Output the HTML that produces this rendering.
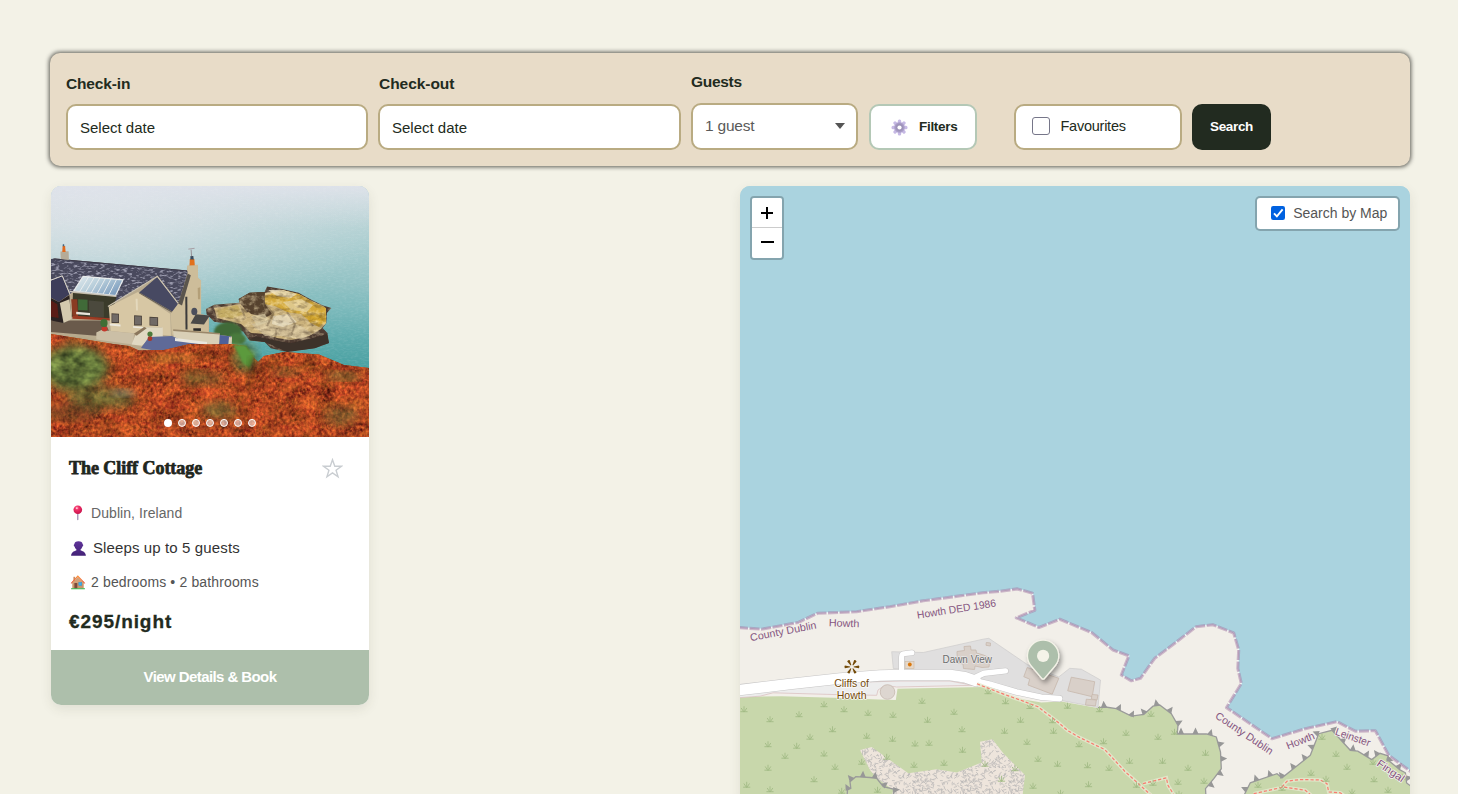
<!DOCTYPE html>
<html lang="en">
<head>
<meta charset="utf-8">
<title>Cottage search</title>
<style>
*{box-sizing:border-box;margin:0;padding:0}
html,body{width:1458px;height:794px;overflow:hidden;background:#f3f2e7}
body{font-family:"Liberation Sans",sans-serif;color:#222b20;position:relative}
#app{position:absolute;left:0;top:0;width:1458px;height:794px;overflow:hidden;background:#f3f2e7}
.abs{position:absolute;white-space:nowrap}
/* search bar */
.bar{position:absolute;left:50px;top:53px;width:1360px;height:113px;background:#e8dcc8;border-radius:10px;box-shadow:0 0 4px 1px rgba(40,40,35,.75)}
.lbl{position:absolute;font-weight:bold;font-size:15.5px;line-height:20px;letter-spacing:-.15px;color:#222b20;white-space:nowrap}
.inp{position:absolute;height:46px;background:#fff;border:2px solid #b9ab82;border-radius:10px}
.inp span{position:absolute;left:12px;top:13px;font-size:15px;line-height:18px;color:#222b20;white-space:nowrap}
/* card */
.card{position:absolute;left:51px;top:186px;width:318px;height:519px;background:#fff;border-radius:10px;box-shadow:0 4px 12px rgba(60,60,40,.10);overflow:hidden}
.photo{position:absolute;left:0;top:0;width:318px;height:251px;overflow:hidden;background:#8fb5b8}
.cta{position:absolute;left:0;top:464px;width:318px;height:55px;background:#adbfab;color:#fff;font-weight:bold;font-size:15px;text-align:center;line-height:53px;letter-spacing:-.58px}
/* map */
.map{position:absolute;left:740px;top:186px;width:670px;height:620px;background:#aad3df;border-radius:10px;overflow:hidden;box-shadow:0 4px 12px rgba(60,60,40,.10)}
.zoomctl{position:absolute;left:10px;top:10px;width:34px;height:64px;border:2px solid rgba(0,0,0,.22);border-radius:4px;background-clip:padding-box}
.zoomctl i{display:block;width:30px;height:30px;background:#fff;position:relative}
.zoomctl i:first-child{border-radius:2px 2px 0 0;height:30px;border-bottom:1px solid #ccc}
.zoomctl i:last-child{border-radius:0 0 2px 2px}
.sbm{position:absolute;left:515px;top:10px;width:145px;height:35px;border:2px solid rgba(0,0,0,.22);border-radius:5px;background:#fff;background-clip:padding-box}
</style>
</head>
<body>
<div id="app">

<!-- SEARCH BAR -->
<div class="bar">
  <div class="lbl" style="left:16px;top:21px">Check-in</div>
  <div class="inp" style="left:16px;top:51px;width:302px"><span>Select date</span></div>
  <div class="lbl" style="left:329px;top:21px;letter-spacing:-.05px">Check-out</div>
  <div class="inp" style="left:328px;top:51px;width:303px"><span>Select date</span></div>
  <div class="lbl" style="left:641px;top:19px;letter-spacing:-.3px">Guests</div>
  <div class="inp" style="left:641px;top:50px;width:167px;height:47px;border-radius:10px">
    <span style="left:12px;top:12px;font-size:15.5px;color:#5a5a5a;letter-spacing:-.2px">1 guest</span>
    <svg class="abs" style="left:142px;top:18px" width="10" height="6" viewBox="0 0 10 6"><path d="M0 0h10L5 6z" fill="#555"/></svg>
  </div>
  <div class="inp" style="left:819px;top:51px;width:108px;height:46px;border-color:#b4c8b6;border-radius:10px">
    <svg class="abs" id="gear" style="left:20.4px;top:12.6px" width="17" height="17" viewBox="-8.5 -8.5 17 17">
      <defs><radialGradient id="gg" r="1"><stop offset=".3" stop-color="#9d92b8"/><stop offset=".55" stop-color="#bcaedd"/><stop offset="1" stop-color="#c9bde6"/></radialGradient></defs>
      <g fill="#c6b9e4">
        <g id="t"><rect x="-1.7" y="-8" width="3.4" height="4.5" rx="1.5"/></g>
        <use href="#t" transform="rotate(45)"/><use href="#t" transform="rotate(90)"/><use href="#t" transform="rotate(135)"/>
        <use href="#t" transform="rotate(180)"/><use href="#t" transform="rotate(225)"/><use href="#t" transform="rotate(270)"/><use href="#t" transform="rotate(315)"/>
      </g>
      <circle r="5.4" fill="url(#gg)"/>
      <circle r="2.1" fill="#fff"/>
    </svg>
    <span style="left:48px;top:12px;font-weight:bold;font-size:13.5px;letter-spacing:-.3px">Filters</span>
  </div>
  <div class="inp" style="left:964px;top:51px;width:168px;height:46px;border-radius:10px">
    <div class="abs" style="left:16px;top:11px;width:18px;height:18px;border:1px solid #767689;border-radius:3px;background:#fff"></div>
    <span style="left:44.5px;top:11px;font-size:14.5px;letter-spacing:-.25px">Favourites</span>
  </div>
  <div class="abs" style="left:1142px;top:51px;width:79px;height:46px;background:#222b20;border-radius:10px;color:#fff;font-weight:bold;font-size:13.5px;line-height:46px;text-align:center;letter-spacing:-.35px">Search</div>
</div>

<!-- CARD -->
<div class="card">
  <div class="photo" id="photo"><svg class="abs" style="left:0;top:0" width="318" height="251" viewBox="0 0 318 251">
<defs>
<linearGradient id="sea" x1="0" y1="0" x2="0" y2="1">
 <stop offset="0" stop-color="#cbdcdf"/><stop offset=".06" stop-color="#c2d8db"/><stop offset=".23" stop-color="#abced0"/><stop offset=".39" stop-color="#92c2c4"/>
 <stop offset=".50" stop-color="#79b8ba"/><stop offset=".61" stop-color="#5eabad"/><stop offset=".72" stop-color="#4aa1a2"/><stop offset="1" stop-color="#429c9c"/>
</linearGradient>
<radialGradient id="seaL" cx=".1" cy="0" r="1" gradientTransform="scale(1 1)"><stop offset="0" stop-color="#e6e7ec" stop-opacity=".95"/><stop offset=".45" stop-color="#dfe3e8" stop-opacity=".6"/><stop offset="1" stop-color="#d5dde2" stop-opacity="0"/></radialGradient>
<filter id="fsea" x="0" y="0" width="100%" height="100%"><feTurbulence type="fractalNoise" baseFrequency=".25 .7" numOctaves="2" seed="4"/><feColorMatrix values="0 0 0 0 1  0 0 0 0 1  0 0 0 0 1  1.2 0 0 0 -.5"/></filter>
<filter id="fveg" x="0" y="0" width="100%" height="100%" color-interpolation-filters="sRGB">
 <feTurbulence type="fractalNoise" baseFrequency=".34 .3" numOctaves="2" seed="8" result="f"/>
 <feTurbulence type="fractalNoise" baseFrequency=".06 .08" numOctaves="3" seed="3" result="c"/>
 <feComposite in="f" in2="c" operator="arithmetic" k1="0" k2=".62" k3=".5" k4="-.06" result="n"/>
 <feColorMatrix in="n" values="1.05 0 0 0 .22  .55 .2 0 0 -.05  .22 0 0 0 .03  0 0 0 0 1"/>
 <feComposite operator="in" in2="SourceGraphic"/>
</filter>
<filter id="fgrn" x="-20%" y="-20%" width="140%" height="140%" color-interpolation-filters="sRGB">
 <feTurbulence type="fractalNoise" baseFrequency=".09 .12" numOctaves="3" seed="21" result="n"/>
 <feColorMatrix in="n" values=".55 0 0 0 .08  .62 0 0 0 .14  .3 0 0 0 .07  0 0 0 0 1" result="c"/>
 <feGaussianBlur in="SourceGraphic" stdDeviation="5" result="b"/>
 <feComposite in="c" in2="b" operator="in"/>
</filter>
<filter id="frock" x="0" y="0" width="100%" height="100%" color-interpolation-filters="sRGB">
 <feTurbulence type="fractalNoise" baseFrequency=".16 .2" numOctaves="3" seed="5" result="n"/>
 <feColorMatrix in="n" values="0 0 0 0 1  0 0 0 0 .93  0 0 0 0 .75  2.4 0 0 0 -1.05"/>
 <feComposite operator="in" in2="SourceGraphic"/>
</filter>
<filter id="froof" x="0" y="0" width="100%" height="100%" color-interpolation-filters="sRGB">
 <feTurbulence type="fractalNoise" baseFrequency=".22 .55" numOctaves="2" seed="9" result="n"/>
 <feColorMatrix in="n" values="0 0 0 0 .85  0 0 0 0 .85  0 0 0 0 .92  4 0 0 0 -1.95"/>
 <feComposite operator="in" in2="SourceGraphic"/>
</filter>
<filter id="frockd" x="0" y="0" width="100%" height="100%" color-interpolation-filters="sRGB">
 <feTurbulence type="fractalNoise" baseFrequency=".12 .22" numOctaves="3" seed="14" result="n"/>
 <feColorMatrix in="n" values="0 0 0 0 .25  0 0 0 0 .18  0 0 0 0 .12  0 2.6 0 0 -1.2"/>
 <feComposite operator="in" in2="SourceGraphic"/>
</filter>
<filter id="b1"><feGaussianBlur stdDeviation="1"/></filter>
<filter id="b06"><feGaussianBlur stdDeviation=".6"/></filter>
<filter id="b3"><feGaussianBlur stdDeviation="3"/></filter>
</defs>
<rect width="318" height="251" fill="url(#sea)"/>
<rect width="318" height="150" fill="url(#seaL)"/>
<linearGradient id="seaT" x1="0" y1="0" x2="0" y2="1"><stop offset="0" stop-color="#dee2ea" stop-opacity=".95"/><stop offset=".35" stop-color="#dbe1e8" stop-opacity=".55"/><stop offset="1" stop-color="#d5dde2" stop-opacity="0"/></linearGradient>
<rect width="318" height="42" fill="url(#seaT)"/>
<rect width="318" height="200" filter="url(#fsea)" opacity=".18"/>
<g filter="url(#b06)">
<polygon points="155.0,123.1 163.2,118.7 188.4,116.8 187.7,113.0 198.5,106.7 213.6,106.1 216.1,100.4 231.2,103.0 247.6,106.7 258.9,113.0 271.5,119.3 280.3,121.9 275.9,126.9 275.3,137.0 271.5,142.0 276.5,147.0 277.8,157.1 263.9,162.2 236.2,165.9 219.9,162.2 213.6,155.9 198.5,154.6 192.2,145.8 179.6,138.2 163.2,135.7 155.6,128.2" fill="#4d3b30"/>
<polygon points="163.0,122.0 190.0,118.0 196.0,126.0 212.0,122.0 214.0,107.0 231.0,104.0 247.0,108.0 259.0,114.0 274.0,121.0 275.0,137.0 270.0,143.0 258.0,150.0 240.0,154.0 226.0,152.0 214.0,148.0 200.0,147.0 190.0,138.0 178.0,135.0 166.0,132.0" fill="#cbb27c"/>
<polygon points="213.0,110.0 231.0,104.0 248.0,108.0 262.0,116.0 275.0,122.0 275.0,137.0 262.0,138.0 250.0,128.0 236.0,126.0 224.0,120.0 214.0,118.0" fill="#d3a93a"/>
<polygon points="187.7,113 198.5,106.7 213.6,106.1 214,118 221,128 214,132 200,128 196,124 190,119" fill="#57432f"/>
<polygon points="200,138 222,133 250,140 262,148 250,153 230,150 214,150" fill="#cfbf9c" opacity=".7"/>
<polygon points="166,124 186,119 192,128 182,133 168,131" fill="#c2a95f" opacity=".85"/>
<polygon points="217,104 232,104 246,108 240,112 226,110" fill="#e6dcc0" opacity=".8"/>
<polygon points="232,116 250,113 262,119 256,126 240,124" fill="#e3d7b4" opacity=".65"/>
<polygon points="222,130 238,128 246,136 232,141 221,138" fill="#e8dfc8" opacity=".7"/>
<polygon points="200,130 214,128 218,136 206,140" fill="#d9cca6" opacity=".7"/>
<path d="M214 118 L222 128 L216 140 M236 126 L244 138 L240 150 M256 126 L262 140 M190 120 L194 132 M226 142 L224 152" stroke="#4a3828" stroke-width="2" fill="none" opacity=".35"/>
<polygon points="256,128 274,124 275,137 268,141 258,136" fill="#d4a62e" opacity=".9"/>
</g>
<polygon points="155.0,123.1 163.2,118.7 188.4,116.8 187.7,113.0 198.5,106.7 213.6,106.1 216.1,100.4 231.2,103.0 247.6,106.7 258.9,113.0 271.5,119.3 280.3,121.9 275.9,126.9 275.3,137.0 271.5,142.0 276.5,147.0 277.8,157.1 263.9,162.2 236.2,165.9 219.9,162.2 213.6,155.9 198.5,154.6 192.2,145.8 179.6,138.2 163.2,135.7 155.6,128.2" fill="#fff" filter="url(#frock)" opacity=".55"/>
<polygon points="163.0,122.0 190.0,118.0 196.0,126.0 212.0,122.0 214.0,107.0 231.0,104.0 247.0,108.0 259.0,114.0 274.0,121.0 275.0,137.0 270.0,143.0 258.0,150.0 240.0,154.0 226.0,152.0 214.0,148.0 200.0,147.0 190.0,138.0 178.0,135.0 166.0,132.0" fill="#fff" filter="url(#frockd)" opacity=".42"/>
<polygon points="198,154 214,156 236,166 264,162 278,157 276,148 262,152 240,157 222,154 205,150" fill="#3e3029" filter="url(#b06)"/>
<ellipse cx="177" cy="146" rx="14" ry="10" fill="#416b39" filter="url(#b1)"/>
<ellipse cx="186" cy="153" rx="9" ry="6" fill="#4a7a3e" filter="url(#b1)"/>
<polygon points="0,74 4,72.5 136,84.6 136.5,80 146.500,79 147,92 150,95 150,128 158,130 158,146 169,149 181,150.500 180,172 0,162" fill="#b9ab8f"/>
<g filter="url(#b06)">
<polygon points="0.0,134.6 52.9,134.6 59.2,147.2 45.3,149.7 0.0,145.9" fill="#6b5a4c"/>
<polygon points="0.0,72.9 4.4,72.6 136.0,84.6 138.5,87.0 127.8,117.6 106.4,90.5 57.3,120.8 65.5,109.4 22.7,105.0 18.9,108.2 11.3,89.9 0.0,94.3" fill="#4a495d"/>
</g>
<polygon points="0.0,72.9 4.4,72.6 136.0,84.6 138.5,87.0 127.8,117.6 106.4,90.5 57.3,120.8 65.5,109.4 22.7,105.0 18.9,108.2 11.3,89.9 0.0,94.3" fill="#fff" filter="url(#froof)" opacity=".55"/>
<polygon points="106.4,90.8 127.0,117.2 124.9,127.7 88.2,106.6" fill="#fff" filter="url(#froof)" opacity=".18"/>
<g filter="url(#b06)">
<polyline points="2.5,72.9 136.0,84.9" fill="none" stroke="#3a3948" stroke-width="1"/>
<polygon points="9.4,65.6 17.6,65.3 17.9,73.9 9.8,73.1" fill="#b5ab98"/>
<polygon points="11.6,60.0 14.1,60.0 14.6,66.1 11.3,66.1" fill="#e1681f"/>
<polygon points="11.8,58.3 13.1,58.3 13.4,60.3 11.6,60.3" fill="#43627a"/>
<polygon points="0.0,94.6 11.1,90.3 18.4,108.4 7.8,116.0 0.0,111.7" fill="#3d3e5a"/>
<polyline points="0.0,94.1 11.3,89.8 19.1,108.4" fill="none" stroke="#d9d6cf" stroke-width="1"/>
<polygon points="0.0,111.9 7.8,116.0 18.4,108.9 20.2,133.3 12.6,137.1 0.0,134.6" fill="#2a2220"/>
<polygon points="8.8,117.0 18.4,113.2 20.8,133.3 12.6,137.1" fill="#d4c9ae"/>
<polygon points="0.0,114.5 6.3,118.2 7.6,132.1 0.0,130.8" fill="#5a1f18"/>
<polygon points="22.0,106.9 65.5,110.9 59.2,132.7 20.8,130.8" fill="#3a3a2c"/>
<polygon points="20.2,113.2 26.2,113.2 27.1,130.2 21.4,129.6" fill="#8a3a22"/>
<polygon points="27.1,113.2 36.5,113.8 36.5,124.5 27.1,123.9" fill="#3f6a38"/>
<polygon points="37.8,114.5 52.9,115.7 52.9,131.5 38.4,130.8" fill="#4c4a3c"/>
<polygon points="25.2,125.8 39.0,127.0 39.0,129.3 25.2,128.3" fill="#e8e4da"/>
<polygon points="21.4,129.6 59.2,132.3 59.2,134.6 21.4,132.7" fill="#9c3a24"/>
<linearGradient id="gl" x1="0" y1="0" x2="1" y2=".6"><stop offset="0" stop-color="#e4ecef"/><stop offset=".5" stop-color="#b9cfdb"/><stop offset="1" stop-color="#7f9fc0"/></linearGradient>
<polygon points="32.1,90.3 72.0,93.8 64.5,109.7 22.7,105.1" fill="url(#gl)" stroke="#e9ecec" stroke-width="1.2"/>
<polyline points="37.7,90.8 28.5,105.8" stroke="#eef1f0" stroke-width=".9" fill="none"/>
<polyline points="43.3,91.3 34.4,106.4" stroke="#eef1f0" stroke-width=".9" fill="none"/>
<polyline points="48.9,91.8 40.2,107.0" stroke="#eef1f0" stroke-width=".9" fill="none"/>
<polyline points="54.5,92.2 46.1,107.7" stroke="#eef1f0" stroke-width=".9" fill="none"/>
<polyline points="60.1,92.7 51.9,108.3" stroke="#eef1f0" stroke-width=".9" fill="none"/>
<polyline points="65.7,93.2 57.8,108.9" stroke="#eef1f0" stroke-width=".9" fill="none"/>
<polyline points="18.9,105.4 65.5,110.2" stroke="#c9c7c0" stroke-width="1.3" fill="none"/>
<polygon points="57.7,120.8 86.9,106.1 119.1,127.8 119.9,149.7 110.8,148.7 110.8,141.2 94.7,140.9 88.2,147.7 59.8,144.9" fill="#d7c7a4"/>
<polygon points="106.4,90.8 127.0,117.2 124.9,127.7 88.2,106.6" fill="#474962"/>
<polyline points="56.9,120.5 106.4,90.3 127.2,117.5" fill="none" stroke="#cfc6b0" stroke-width="1.2"/>
<polyline points="88.2,106.9 124.7,128.3" fill="none" stroke="#6a6256" stroke-width="1.1"/>
<polygon points="136.3,79.4 146.9,78.7 147.1,91.8 150.1,94.6 150.1,128.6 157.7,129.8 157.7,145.9 120.9,148.7 119.6,127.7 127.5,117.2 136.6,87.0" fill="#cdbd9a"/>
<polygon points="127.2,117.6 136.6,87.4 139.8,89.3 131.0,119.5" fill="#5a544e"/>
<polygon points="138.8,73.1 143.3,72.9 143.8,79.2 138.5,79.4" fill="#e2711f"/>
<polygon points="139.5,70.1 142.3,70.1 142.8,73.6 139.3,73.6" fill="#3a4c5e"/>
<polyline points="140.6,70.4 140.1,63.6" stroke="#8d7f86" stroke-width=".8" fill="none"/>
<polyline points="137.3,63.1 143.6,62.3" stroke="#a08f95" stroke-width=".8" fill="none"/>
<polygon points="134.3,110.7 136.3,110.7 136.5,143.4 134.5,143.4" fill="#3b3a3a"/>
<polygon points="146.7,101.9 149.2,101.2 149.2,113.2 147.0,113.2" fill="#b39f78"/>
<ellipse cx="143.3" cy="125.5" rx="3" ry="3.8" fill="#4b4f5c"/>
<polygon points="144.8,128.3 158.9,129.6 153.0,138.6 139.5,137.4" fill="#4a4846"/>
<polygon points="142.3,142.2 149.9,142.2 149.9,144.9 142.3,144.7" fill="#2c2a28"/>
<polygon points="60.5,127.3 68.0,127.7 68.0,137.1 60.5,136.9" fill="#4a4038"/>
<polygon points="61.2,128.3 67.3,128.6 67.3,136.1 61.2,136.0" fill="#6f6a66"/>
<polygon points="83.1,129.3 90.9,129.7 90.9,139.6 83.1,139.4" fill="#4a4038"/>
<polygon points="83.9,130.3 90.2,130.6 90.2,138.6 83.9,138.5" fill="#6f6a66"/>
<polygon points="98.5,130.8 107.1,131.2 107.1,139.9 98.5,139.6" fill="#4a4038"/>
<polygon points="99.2,131.8 106.3,132.1 106.3,138.9 99.2,138.8" fill="#6f6a66"/>
<polygon points="58.7,137.4 69.5,138.4 69.5,140.4 58.7,139.4" fill="#ece8dd"/>
<polygon points="82.1,140.1 91.9,140.9 91.9,142.4 82.1,141.8" fill="#ece8dd"/>
<polygon points="84.6,112.7 86.6,112.7 86.9,124.5 85.1,124.5" fill="#e4d9bd"/>
<polygon points="45.3,146.6 50.4,144.1 83.1,147.5 81.9,158.5 45.3,153.5" fill="#cbbfa6"/>
<polygon points="84.1,149.7 94.7,141.2 111.8,141.4 111.8,151.0 100.8,151.6 90.7,159.8 80.6,158.5" fill="#e0d8c2"/>
<polygon points="83.1,147.5 93.2,140.9 95.7,142.2 85.6,149.7" fill="#8a765c"/>
<polygon points="122.2,143.7 168.8,147.5 168.5,159.8 122.8,154.8" fill="#d9cfb6"/>
<polygon points="122.2,143.2 168.8,146.9 168.8,148.5 122.2,144.9" fill="#9a876a"/>
<polygon points="88.2,179.9 98.2,170.5 120.9,170.5 133.5,176.8 157.4,178.7 151.1,185.0 110.8,185.6" fill="#5d6896"/>
</g>
<g filter="url(#b06)">
<polygon points="90,162 98,151 121,150 134,156 157,158 150,166 111,166" fill="#5e6a98"/>
<polygon points="124,152 156,156 156,159 124,155" fill="#e9e6de"/>
<polygon points="168.8,149 180,150.5 178,162 168,160" fill="#50609a"/>
<polygon points="178,151 181,151.5 180,164 177,162" fill="#d8d0b8"/>
<ellipse cx="53.5" cy="143" rx="3" ry="2.4" fill="#c4382a"/><ellipse cx="53" cy="137" rx="3.6" ry="4" fill="#3f6e34"/>
<ellipse cx="99" cy="152.5" rx="2.3" ry="2.6" fill="#a8382a"/><ellipse cx="99" cy="148" rx="2.6" ry="2.6" fill="#4b7a3a"/>
</g>
<polygon points="0.0,148.0 31.5,153.0 50.0,156.0 62.0,158.0 78.0,160.0 88.0,164.5 113.0,164.0 138.5,158.0 160.0,158.5 180.0,158.0 195.0,160.0 203.0,172.0 207.0,176.0 213.0,170.0 233.0,166.0 268.0,168.6 293.0,179.0 318.0,182.0 318.0,251.0 0.0,251.0" fill="#a8401a"/>
<polygon points="0.0,148.0 31.5,153.0 50.0,156.0 62.0,158.0 78.0,160.0 88.0,164.5 113.0,164.0 138.5,158.0 160.0,158.5 180.0,158.0 195.0,160.0 203.0,172.0 207.0,176.0 213.0,170.0 233.0,166.0 268.0,168.6 293.0,179.0 318.0,182.0 318.0,251.0 0.0,251.0" fill="#fff" filter="url(#fveg)"/>
<g>
<ellipse cx="24" cy="182" rx="34" ry="24" fill="#fff" filter="url(#fgrn)" opacity=".95"/>
<ellipse cx="50" cy="212" rx="34" ry="11" fill="#fff" filter="url(#fgrn)" opacity=".7"/>
<ellipse cx="194" cy="172" rx="12" ry="14" fill="#fff" filter="url(#fgrn)" opacity=".9"/>
<ellipse cx="150" cy="192" rx="22" ry="7" fill="#fff" filter="url(#fgrn)" opacity=".5"/>
<ellipse cx="168" cy="224" rx="18" ry="8" fill="#fff" filter="url(#fgrn)" opacity=".6"/>
<ellipse cx="292" cy="190" rx="18" ry="4" fill="#fff" filter="url(#fgrn)" opacity=".7"/>
<ellipse cx="290" cy="230" rx="18" ry="10" fill="#fff" filter="url(#fgrn)" opacity=".45"/>
<ellipse cx="235" cy="186" rx="14" ry="4" fill="#fff" filter="url(#fgrn)" opacity=".5"/>
</g>
<ellipse cx="120" cy="172" rx="26" ry="5" fill="#c9a23a" opacity=".35" filter="url(#b3)"/>
<ellipse cx="72" cy="207" rx="13" ry="4" fill="#8d8c80" opacity=".45" filter="url(#b3)"/>
<ellipse cx="22" cy="226" rx="30" ry="10" fill="#3a3a24" opacity=".4" filter="url(#b3)"/>
<polygon points="182,159 195,159 203,170 199,182 192,177 187,167" fill="#5c9a3c" filter="url(#b1)"/>
<path d="M203 172 Q199 186 196 202" stroke="#2e2410" stroke-width="5" fill="none" opacity=".55" filter="url(#b3)"/>
<circle cx="117" cy="236.9" r="4" fill="#fff"/>
<circle cx="131" cy="236.9" r="3.5" fill="#fff" fill-opacity=".5" stroke="#fff" stroke-width="1"/>
<circle cx="145" cy="236.9" r="3.5" fill="#fff" fill-opacity=".5" stroke="#fff" stroke-width="1"/>
<circle cx="159" cy="236.9" r="3.5" fill="#fff" fill-opacity=".5" stroke="#fff" stroke-width="1"/>
<circle cx="173" cy="236.9" r="3.5" fill="#fff" fill-opacity=".5" stroke="#fff" stroke-width="1"/>
<circle cx="187" cy="236.9" r="3.5" fill="#fff" fill-opacity=".5" stroke="#fff" stroke-width="1"/>
<circle cx="201" cy="236.9" r="3.5" fill="#fff" fill-opacity=".5" stroke="#fff" stroke-width="1"/>
</svg></div>
  <div class="abs" id="title" style="left:18px;top:269.5px;font-family:'Liberation Serif',serif;font-weight:bold;font-size:18px;line-height:24px;letter-spacing:-.05px;color:#1f261d;-webkit-text-stroke:.75px #1f261d">The Cliff Cottage</div>
  <svg class="abs" style="left:271px;top:272px" width="21" height="20.5" viewBox="0 0 23 22" preserveAspectRatio="none"><path d="M11.5 1.8l2.5 7h7.3l-5.9 4.4 2.2 7-6.1-4.3-6.1 4.3 2.2-7L1.7 8.800h7.3z" fill="none" stroke="#c9cdd1" stroke-width="1.5" stroke-linejoin="miter"/></svg>
  <div class="abs" style="left:40px;top:318px;font-size:14px;line-height:18px;color:#666;letter-spacing:.07px">Dublin, Ireland</div>
  <div class="abs" style="left:42px;top:353px;font-size:15px;line-height:18px;color:#333;letter-spacing:.12px">Sleeps up to 5 guests</div>
  <div class="abs" style="left:40px;top:387px;font-size:14px;line-height:18px;color:#555;letter-spacing:.14px">2 bedrooms • 2 bathrooms</div>
  <div class="abs" style="left:18px;top:423.5px;font-weight:bold;font-size:19px;line-height:24px;letter-spacing:.92px;color:#222b20;-webkit-text-stroke:.3px #222b20">€295/night</div>

  <svg class="abs" style="left:21px;top:319px" width="12" height="16" viewBox="0 0 12 16">
    <defs><radialGradient id="pg" cx=".4" cy=".3" r=".75"><stop offset="0" stop-color="#ff7d9c"/><stop offset=".35" stop-color="#ee2d66"/><stop offset="1" stop-color="#c4124a"/></radialGradient></defs>
    <path d="M5.8 8v6.6" stroke="#9079a6" stroke-width="1.1" stroke-linecap="round"/>
    <circle cx="5.8" cy="4.7" r="4.3" fill="url(#pg)"/><circle cx="4.8" cy="3.2" r=".9" fill="#ffd0dc" opacity=".9"/>
  </svg>
  <svg class="abs" style="left:19px;top:353.500px" width="17" height="17" viewBox="0 0 17 17">
    <defs><linearGradient id="ug" x1="0" y1="0" x2="0" y2="1"><stop offset="0" stop-color="#5f3499"/><stop offset="1" stop-color="#432277"/></linearGradient></defs>
    <path d="M1.1 15.7c.2-3.4 2.6-4.6 5-5.3.5-.2.6-.6.3-1C5.300 8.500 4.800 7.500 4.700 6.500c-.7-.1-.9-.7-.9-1.300 0-.5.200-.8.600-.9C4.400 2.400 5.900 1.300 8.500 1.300s4.100 1.100 4.100 3c.4.100.6.400.6.900 0 .6-.2 1.200-.9 1.300-.1 1-.6 2-1.700 2.900-.3.400-.2.800.3 1 2.400.7 4.800 1.900 5 5.300z" fill="url(#ug)"/>
  </svg>
  <svg class="abs" style="left:19px;top:388px" width="17" height="16" viewBox="0 0 17 16">
    <defs><linearGradient id="rg" x1="0" y1="0" x2="0" y2="1"><stop offset="0" stop-color="#ff9a3a"/><stop offset="1" stop-color="#e8432c"/></linearGradient></defs>
    <rect x="3.4" y="2.800" width="1.700" height="4.500" fill="#c98d63"/>
    <rect x="2.300" y="7.500" width="11.400" height="7" fill="#c9966c"/>
    <path d="M.7 9.300L7.800 1.200 15.300 9.300l-1 .2L7.800 3.300 1.700 9.500z" fill="url(#rg)"/>
    <path d="M2.300 8.700L7.800 3.300l5.900 5.400v.9H2.300z" fill="#d3a076"/>
    <rect x="4.400" y="9" width="2.900" height="5.500" fill="#7b4a3c"/>
    <rect x="8.800" y="8.400" width="3" height="3" fill="#38b0ee" stroke="#2b8fd0" stroke-width=".4"/>
    <rect x=".9" y="14.300" width="14.200" height=".9" rx=".4" fill="#35b34a"/>
  </svg>
  <div class="cta">View Details &amp; Book</div>
</div>

<!-- MAP -->
<div class="map">
  <svg class="abs" style="left:0;top:0" width="670" height="620" viewBox="740 186 670 620">
<defs>
<g id="sb" fill="none" stroke="#a3bb86" stroke-width="0.9" stroke-linecap="round"><path d="M-3.2 2.2h6.4M0 2.2v-5M-0.4 2.2l-2.2-3.4M0.4 2.2l2.2-3.4"/></g>
<pattern id="rk" width="48" height="48" patternUnits="userSpaceOnUse"><rect width="48" height="48" fill="#eee5dc"/><path d="M15.5 7.2l-0.7 1.3M25.7 17.6l2.2 0.4M1.8 20.8l1.5 0.3M20.4 39.7l1.6 0.7M30.1 45.5l-0.5 2.0M46.9 2.2l-1.7 0.8M6.9 5.7l1.5 2.2M8.7 27.9l-0.8 1.8M26.3 3.0l1.7 0.3M32.7 20.5l1.3 1.9M21.8 14.4l-2.0 1.5M11.7 27.6l-0.2 2.8M35.0 13.8l-1.6 0.1M20.1 36.3l1.9 1.0M1.9 32.1l-1.7 1.6M42.0 15.1l-1.4 1.9M27.8 21.9l-2.6 1.4M22.8 31.9l2.5 0.5M31.1 47.7l-1.6 1.0M18.5 32.1l2.1 0.2M8.1 5.6l2.6 0.5M6.2 11.9l0.9 2.6M3.9 21.6l-0.4 2.8M39.3 41.5l1.3 1.6M17.2 42.4l-1.6 0.2M8.5 11.1l1.6 1.5M28.3 12.6l2.1 0.0M17.7 27.2l-2.5 0.4M24.7 29.6l-0.8 1.3M43.2 37.4l-2.5 1.0M18.8 19.2l2.3 0.8M3.0 3.2l1.3 1.0M16.3 2.5l1.6 0.0M4.9 17.5l2.8 0.2M29.5 7.1l1.4 1.4M17.5 5.9l-2.7 1.4M22.4 23.2l1.5 0.4M16.4 12.7l-1.4 0.8M1.1 45.6l-0.1 1.6M26.1 1.3l-0.3 3.0M41.4 33.4l1.4 1.5M8.0 37.1l-0.3 2.6M15.8 10.7l-2.5 1.7M40.9 38.7l-2.2 1.4M10.9 24.8l0.6 1.3M1.3 13.4l1.7 1.8M45.9 21.5l-2.9 0.6M45.8 17.5l1.4 1.1M9.4 9.8l-1.1 2.6M40.3 23.0l-1.2 2.4M4.1 31.7l-2.5 0.7M36.0 22.9l2.3 1.4M16.0 38.4l-2.0 0.2M19.3 45.4l-1.1 1.3M6.1 7.3l-2.6 0.8M7.0 39.7l-2.4 0.2M16.8 26.3l1.3 0.6M46.6 31.2l-0.2 2.9M20.8 41.8l-1.5 0.9M12.1 14.1l1.7 1.6M12.4 20.1l2.6 1.1M17.0 22.0l-0.7 2.7M20.2 44.1l-0.0 2.3M25.1 0.9l0.3 1.7M0.2 38.4l1.8 1.1M34.8 26.7l1.2 1.9M26.7 37.6l2.2 0.8M11.9 13.3l-1.7 1.5M27.0 36.5l-2.0 0.6M29.4 24.3l-0.1 2.5M21.7 25.6l0.2 2.9M33.6 42.1l-1.8 0.3M26.9 45.3l-1.4 0.8M5.8 21.2l1.7 0.4M3.5 32.1l-2.2 1.8M7.4 34.4l-0.8 1.4M42.4 46.4l2.3 1.9M19.1 23.4l-2.7 0.1M7.8 20.7l-0.1 1.9M9.4 15.3l-0.9 1.1M26.6 21.1l1.9 0.1M29.9 24.6l2.9 0.6M37.8 46.6l1.7 0.6M1.9 37.4l1.1 1.2M20.3 43.7l-1.5 1.0M7.2 44.1l-0.6 2.5M4.3 2.8l-1.2 1.7M3.5 45.0l-1.1 2.4M4.0 41.1l2.7 0.6M21.8 16.3l-0.5 2.8M12.9 6.2l-0.2 1.8M5.3 7.7l1.7 0.3M15.0 14.6l-1.4 1.3M24.0 8.5l0.7 1.3M12.0 0.7l-1.5 1.7M9.1 22.8l-1.5 0.3M39.3 20.7l0.0 2.7M18.9 24.3l-1.7 2.5M16.4 39.9l-1.5 1.9M19.4 16.7l1.6 0.3M3.4 35.6l1.2 1.2M4.1 40.4l-2.3 1.0M13.5 11.6l1.3 1.7M7.6 21.4l2.0 2.2M46.7 26.3l2.1 2.0M14.9 17.1l2.0 0.0M22.8 24.1l1.8 1.3M0.2 12.7l2.0 0.6M2.0 1.1l1.0 1.4M28.1 25.4l-1.7 1.7M34.4 42.2l0.7 1.8M47.3 7.2l-1.6 1.9M2.1 40.1l-2.3 0.8M35.2 39.0l2.0 0.9M24.2 40.1l-2.2 1.6M28.0 42.9l-1.4 2.1M11.0 1.5l1.8 0.8M5.0 40.1l-0.4 2.4M30.1 32.7l0.0 1.4M38.3 35.9l-0.0 2.3M31.6 3.2l-1.2 1.3M3.6 12.7l-1.1 1.3M35.5 46.8l0.0 2.0M23.0 32.8l-1.8 1.6M30.9 3.7l1.6 0.8M35.7 14.6l-0.3 1.4M2.9 12.9l-1.3 2.2M32.4 14.0l-0.1 2.1M22.4 5.7l-1.6 0.6M47.0 44.9l2.1 0.1M39.4 46.5l0.3 1.8M10.1 45.4l1.8 1.4M6.8 25.2l-1.6 0.2M39.4 24.4l-2.4 0.9M11.1 43.1l0.1 1.4M0.2 23.6l0.3 1.9M6.8 16.5l1.5 2.3M0.1 36.0l-1.4 0.8M44.5 34.2l-1.8 0.6M17.9 18.9l-2.3 0.0M17.3 20.5l1.0 1.1M4.9 40.1l1.8 2.3M12.0 12.8l-0.1 1.7M17.9 45.9l-2.5 1.0M30.3 43.8l-2.2 0.4M34.5 2.4l-1.4 1.6M36.1 30.9l0.9 1.2M44.5 6.1l0.2 1.9M14.3 35.5l-1.8 0.1M31.5 14.4l-0.4 2.0M8.0 7.8l2.3 1.7M23.9 10.6l-2.9 0.9M21.6 6.7l1.3 0.9M16.4 4.4l1.3 1.2M27.3 42.6l-1.5 1.5M19.9 25.2l0.7 1.8M3.0 13.3l-1.6 0.2M24.2 30.2l-1.6 0.7M13.0 11.9l0.7 2.0M45.8 40.7l-1.3 0.6M1.5 34.1l-2.0 0.7M28.2 0.0l1.0 2.7M39.6 41.1l-1.8 0.2M5.2 7.4l-0.2 2.5M45.2 34.6l-1.2 2.3M22.0 26.5l2.6 0.3M11.2 44.2l-0.8 1.7M6.1 12.1l-1.0 2.3M5.4 3.4l-0.2 2.3M18.6 10.7l-0.4 1.3M14.5 22.1l-2.4 0.3M42.4 22.8l1.3 1.2M46.1 33.8l0.8 1.2M23.9 32.4l0.5 1.8M32.0 44.4l1.1 1.0M16.2 20.2l-0.9 1.4M38.3 35.5l-0.0 1.7M46.6 15.0l-1.5 0.9M10.6 36.5l1.8 2.3M23.8 9.0l1.6 1.3M31.9 45.5l1.8 0.9M10.2 46.8l1.3 0.6M2.9 18.9l-2.7 0.9M35.2 47.9l-1.9 0.4M8.9 44.9l-1.0 1.0M31.9 18.2l0.7 1.8M8.1 0.1l1.3 1.5M45.9 5.9l-1.7 0.2M17.1 39.4l-1.8 1.1M2.4 22.7l1.1 2.6M9.3 17.5l-1.4 0.5M19.7 39.0l-1.1 1.0M1.7 3.0l-1.8 0.5M35.9 43.1l0.9 1.6M46.0 29.6l1.7 1.9M15.2 13.2l2.6 0.0M44.0 30.4l-1.4 0.3M11.2 22.8l-2.9 0.4M18.6 12.1l0.5 2.1M44.5 8.8l-2.1 1.5M39.5 37.1l-0.6 1.8M15.3 17.4l-1.2 1.0M9.5 36.1l1.1 1.1M1.6 26.5l1.5 2.5M42.4 47.4l1.0 1.1M4.6 23.9l-1.3 1.7M11.2 20.0l-0.9 2.3M35.9 40.7l-0.8 1.4M40.4 14.1l-0.4 2.0M35.4 9.6l1.3 1.3M7.4 42.4l-0.5 1.9M19.0 47.6l-0.0 1.8M38.8 31.4l-1.6 0.0M22.8 39.3l-2.5 1.4M1.9 14.1l1.6 0.6M46.7 28.0l-1.9 0.4M41.6 21.6l1.8 1.9M45.4 5.1l-0.7 2.3M10.4 17.7l1.6 0.7M12.2 28.8l-0.8 1.5M0.5 15.7l-0.9 1.4M15.0 9.8l-1.8 1.4M3.0 4.9l0.7 2.2M30.7 4.4l2.2 1.2M19.7 13.6l1.7 2.4M15.0 27.2l0.9 1.9M41.5 47.8l0.7 1.6M34.9 9.8l2.8 0.1M20.3 39.4l0.8 2.7M22.1 7.8l2.3 0.1M30.8 43.7l2.3 0.7M17.8 24.2l1.7 0.8M25.0 44.4l2.1 0.7M38.6 46.4l1.3 0.9M45.3 46.8l0.1 1.5M44.5 18.6l-2.3 0.7M39.6 7.7l-1.4 1.1M19.4 40.6l-1.5 0.9M10.5 19.2l-0.1 2.0M5.9 11.9l-1.8 2.2M2.0 27.0l-1.1 1.0M40.2 5.7l-0.7 2.2M30.1 14.7l0.6 2.3M20.4 31.6l0.3 2.1M1.1 29.7l0.1 1.8M36.7 37.4l0.2 1.7M22.7 5.1l1.9 0.8M4.4 21.2l-0.0 1.5M30.5 3.9l-1.8 2.0M24.6 2.6l-0.0 2.0M45.6 6.5l-2.7 1.3M35.1 39.1l2.4 1.7M23.6 45.9l-1.6 0.4M37.8 44.7l1.9 0.4M36.3 7.6l-1.7 0.6M39.2 6.9l-0.0 2.9M10.0 12.6l-0.0 1.9M1.8 8.7l2.5 1.4M32.6 43.0l2.3 1.3M5.5 25.5l-0.8 1.8M41.9 26.6l-0.7 2.7M5.0 47.7l-0.8 1.9M38.3 12.7l-2.3 0.1M17.3 36.7l0.3 1.7M35.7 2.3l-1.5 1.0M30.7 47.2l-0.7 2.4M15.0 0.1l1.6 0.2M29.6 20.7l-0.1 2.8M6.3 10.9l-0.7 1.3M0.1 17.0l1.9 0.6M10.8 28.0l-0.5 1.7M29.9 22.8l2.6 1.2M11.7 7.2l2.3 0.7M41.8 37.5l0.6 1.7M0.6 31.0l-0.4 1.9M31.0 21.3l-2.5 0.5M11.9 43.4l2.2 0.3M19.5 11.4l2.6 0.5M0.6 26.4l-1.6 0.3M9.6 29.2l-0.1 2.4M39.0 8.4l1.1 1.6M2.3 42.7l-2.0 1.6M0.3 40.5l-1.5 1.5M35.6 21.7l1.2 1.0M11.2 1.9l1.3 2.3M33.4 40.6l-1.1 1.4M26.6 20.9l-1.8 1.4M12.7 30.8l-1.7 0.2M42.2 0.7l1.2 1.3M35.7 45.3l-1.3 1.4M42.2 15.8l2.1 1.9M30.3 33.3l-1.5 2.6M22.5 40.3l-1.6 2.3M21.0 34.8l-0.4 1.8M10.2 29.9l2.8 0.7M6.9 1.3l2.7 0.9M16.6 6.8l1.5 0.1M33.2 30.4l-1.5 2.1M3.2 28.3l1.1 2.5M39.3 42.8l2.7 0.6M43.9 45.3l1.6 0.6M5.4 1.7l-2.4 1.2M30.4 39.6l-0.7 1.7M4.8 4.7l-1.2 1.2M15.3 20.3l1.8 0.1M13.6 34.4l0.8 1.8M46.3 24.2l-2.1 1.1M1.5 19.8l0.5 2.6M16.6 33.8l-0.2 1.7M41.4 4.4l-1.4 0.9" stroke="#bdbab9" stroke-width="0.8" fill="none" stroke-linecap="round"/></pattern>
<filter id="msh" x="-50%" y="-50%" width="200%" height="200%"><feDropShadow dx="2" dy="3" stdDeviation="2.6" flood-color="#000" flood-opacity=".38"/></filter>
</defs>
<rect x="740" y="186" width="670" height="620" fill="#aad3df"/>
<polygon points="738.0,627.5 761.7,629.2 798.3,622.5 817.5,613.3 856.7,611.7 890.0,606.7 923.3,600.8 983.0,592.8 1000.0,591.3 1017.4,588.9 1032.5,593.2 1034.8,610.2 1016.3,617.8 1038.9,627.5 1059.7,619.3 1091.5,632.5 1113.0,650.0 1128.8,655.8 1121.3,675.0 1131.3,680.8 1140.5,678.3 1154.7,658.3 1167.0,649.2 1196.2,626.7 1212.8,624.7 1233.7,633.0 1238.7,650.0 1237.8,668.3 1241.3,683.5 1226.5,707.6 1272.0,738.7 1305.3,728.7 1337.0,721.7 1355.3,731.2 1375.3,730.7 1388.7,755.3 1412.0,772.5 1412.0,810.0 738.0,810.0" fill="#f2efe9"/>
<polygon points="738.0,697.0 781.7,696.2 833.3,697.8 878.3,699.5 895.8,700.0 897.5,688.7 983.0,687.0 1004.7,694.5 1016.3,698.2 1041.3,702.4 1061.3,701.6 1096.3,707.8 1105.5,707.0 1116.3,708.7 1131.3,716.2 1143.8,714.5 1153.0,706.2 1159.7,705.0 1171.3,713.7 1178.0,725.3 1177.2,734.0 1206.3,734.0 1216.3,737.0 1220.5,752.0 1221.3,768.7 1213.8,778.7 1205.5,788.7 1206.0,810.0 738.0,810.0" fill="#c8d7ab"/>
<polygon points="1243.7,796.0 1250.3,782.8 1277.0,773.7 1282.0,777.8 1298.7,764.5 1310.3,755.3 1318.7,733.7 1332.0,730.3 1350.3,750.3 1357.8,751.2 1371.7,759.6 1380.0,753.3 1388.3,755.8 1387.0,759.2 1400.0,769.9 1405.4,772.8 1406.6,782.9 1412.0,787.0 1412.0,810.0 1240.0,810.0" fill="#c8d7ab"/>
<polygon points="860.0,750.0 871.7,747.0 908.3,773.3 936.7,769.2 956.7,772.5 981.7,762.5 980.0,741.7 992.5,739.2 1003.3,753.3 1025.0,775.0 1022.5,796.0 891.7,796.0 893.3,790.0 876.7,778.3 870.0,770.0" fill="url(#rk)"/>
<polygon points="891.7,651.7 923.3,652.5 983.0,639.2 988.8,638.3 1028.0,665.0 1058.8,676.9 1069.7,668.3 1081.3,669.2 1100.5,680.0 1098.0,707.3 1061.3,700.5 1041.0,698.0 1016.3,692.0 983.0,681.0 973.0,680.0 955.0,671.0 893.3,668.5" fill="#e0dfdf" stroke="#cdcccc" stroke-width=".7"/>
<polygon points="738.0,694.5 760.0,692.0 800.0,687.0 850.0,682.5 900.0,681.0 950.0,681.0 973.0,685.3 896.7,687.0 885.0,685.3 878.0,690.0 876.7,695.3 833.0,694.5 773.0,692.8 760.0,696.2 738.0,697.8" fill="#ededed" stroke="#d9bcbc" stroke-width="0.7"/>
<circle cx="887.5" cy="692" r="7.3" fill="#ddd6d0" stroke="#c9bdb4" stroke-width="0.9"/>
<polygon points="1027.2,667.5 1058.8,678.3 1052.2,694.2 1028.0,685.0 1029.7,679.2 1023.8,676.7" fill="#d9d0c9" stroke="#c6b7ac" stroke-width="0.8"/>
<polygon points="1071.3,677.2 1094.7,681.7 1092.2,696.7 1067.7,690.8" fill="#d9d0c9" stroke="#c6b7ac" stroke-width="0.8"/>
<polygon points="1092.0,694.5 1098.0,695.0 1097.0,700.0 1091.3,699.0" fill="#d9d0c9" stroke="#c6b7ac" stroke-width="0.8"/>
<polygon points="1086.3,699.2 1096.3,700.0 1095.5,705.8 1085.5,705.0" fill="#d9d0c9" stroke="#c6b7ac" stroke-width="0.8"/>
<polygon points="986.3,642.5 990.5,643.0 990.3,646.0 986.0,645.3" fill="#d9d0c9" stroke="#c6b7ac" stroke-width="0.8"/>
<polygon points="957.0,651.5 964.5,650.5 964.0,646.5 970.5,646.0 971.0,650.0 976.0,650.0 976.5,653.0 983.5,655.0 990.0,658.0 989.0,667.0 982.0,667.5 975.0,666.0 974.5,669.5 963.5,668.5 963.0,664.0 957.5,663.0" fill="#d9d0c9" stroke="#c6b7ac" stroke-width="0.8"/>
<rect x="905" y="661.5" width="9" height="7" fill="#e6d8c8" stroke="#cbb9a4" stroke-width="0.6"/><circle cx="909.8" cy="664.5" r="1.9" fill="#d9780f"/>
<path d="M738.0 690.2 L790.0 684.0 L840.0 678.5 L880.0 675.6 L900.0 675.0 L950.0 675.0 L965.0 677.2 L976.0 681.0" fill="none" stroke="#c6c5c5" stroke-width="11.7" stroke-linecap="round" stroke-linejoin="round"/>
<path d="M976 681 L990 684.3 L1016.3 692 L1041.3 697.3 L1059.7 698.6" fill="none" stroke="#c6c5c5" stroke-width="6.6" stroke-linecap="round" stroke-linejoin="round"/>
<path d="M975 677.5 L984 673.3 L1005.5 670.9" fill="none" stroke="#c6c5c5" stroke-width="6.4" stroke-linecap="round" stroke-linejoin="round"/>
<path d="M901.5 674 L901.5 657 Q901.5 653.5 905 653.5 L912 652.8" fill="none" stroke="#c6c5c5" stroke-width="6.0" stroke-linecap="round" stroke-linejoin="round"/>
<path d="M738.0 690.2 L790.0 684.0 L840.0 678.5 L880.0 675.6 L900.0 675.0 L950.0 675.0 L965.0 677.2 L976.0 681.0" fill="none" stroke="#fff" stroke-width="10.5" stroke-linecap="round" stroke-linejoin="round"/>
<path d="M976 681 L990 684.3 L1016.3 692 L1041.3 697.3 L1059.7 698.6" fill="none" stroke="#fff" stroke-width="5.6" stroke-linecap="round" stroke-linejoin="round"/>
<path d="M975 677.5 L984 673.3 L1005.5 670.9" fill="none" stroke="#fff" stroke-width="5.4" stroke-linecap="round" stroke-linejoin="round"/>
<path d="M901.5 674 L901.5 657 Q901.5 653.5 905 653.5 L912 652.8" fill="none" stroke="#fff" stroke-width="5.0" stroke-linecap="round" stroke-linejoin="round"/>
<path d="M977.0 683.8 L983.0 686.2 L1004.7 694.5 L1021.0 700.3 L1038.0 706.8 L1059.0 723.0 L1067.5 730.5 L1080.0 737.7 L1104.7 749.5 L1124.7 771.2 L1153.0 797.0" fill="none" stroke="#e6ead0" stroke-width="3.6" stroke-opacity=".8"/>
<path d="M1143.0 783.7 L1166.3 777.8 L1168.0 785.3 L1174.5 796.0" fill="none" stroke="#e6ead0" stroke-width="3.6" stroke-opacity=".8"/>
<path d="M1253.7 793.7 L1283.7 787.0 L1305.3 790.3 L1312.0 796.0" fill="none" stroke="#e6ead0" stroke-width="3.6" stroke-opacity=".8"/>
<path d="M1282.0 787.0 L1287.0 781.2 L1300.3 779.5 L1320.3 780.0 L1327.0 783.7 L1328.7 792.0 L1340.3 792.8 L1346.0 797.0" fill="none" stroke="#e6ead0" stroke-width="3.6" stroke-opacity=".8"/>
<path d="M977.0 683.8 L983.0 686.2 L1004.7 694.5 L1021.0 700.3 L1038.0 706.8 L1059.0 723.0 L1067.5 730.5 L1080.0 737.7 L1104.7 749.5 L1124.7 771.2 L1153.0 797.0" fill="none" stroke="#f87c70" stroke-width="1.2" stroke-dasharray="3.2 2"/>
<path d="M1143.0 783.7 L1166.3 777.8 L1168.0 785.3 L1174.5 796.0" fill="none" stroke="#f87c70" stroke-width="1.2" stroke-dasharray="3.2 2"/>
<path d="M1253.7 793.7 L1283.7 787.0 L1305.3 790.3 L1312.0 796.0" fill="none" stroke="#f87c70" stroke-width="1.2" stroke-dasharray="3.2 2"/>
<path d="M1282.0 787.0 L1287.0 781.2 L1300.3 779.5 L1320.3 780.0 L1327.0 783.7 L1328.7 792.0 L1340.3 792.8 L1346.0 797.0" fill="none" stroke="#f87c70" stroke-width="1.2" stroke-dasharray="3.2 2"/>
<path d="M1098.0 707.6 L1105.5 707.0 L1116.3 708.7 L1131.3 716.2 L1143.8 714.5 L1153.0 706.2 L1159.7 705.0 L1171.3 713.7 L1178.0 725.3 L1177.2 734.0 L1206.3 734.0 L1216.3 737.0 L1220.5 752.0 L1221.3 768.7 L1213.8 778.7 L1205.5 788.7 L1206.0 798.0" fill="none" stroke="#9a9a9a" stroke-width="1.3"/>
<path d="M1101.0 707.4L1107.0 706.9L1103.5 700.7ZM1115.4 708.3L1120.8 711.0L1121.0 703.9ZM1128.4 714.8L1133.8 717.4L1134.0 710.4ZM1142.8 715.4L1147.3 711.4L1140.7 708.6ZM1153.8 706.1L1159.7 705.0L1155.6 699.2ZM1166.5 710.1L1171.3 713.7L1172.7 706.8ZM1175.5 721.0L1178.5 726.2L1182.6 720.4ZM1178.0 734.0L1184.0 734.0L1181.0 727.6ZM1192.5 734.0L1198.5 734.0L1195.5 727.6ZM1207.0 734.2L1212.7 735.9L1211.7 728.9ZM1217.6 741.6L1219.2 747.4L1224.6 742.8ZM1220.7 755.7L1221.0 761.7L1227.2 758.4ZM1220.4 769.9L1216.8 774.7L1223.7 776.1ZM1211.6 781.4L1207.7 786.0L1214.6 787.8ZM1205.8 793.7L1206.1 799.7L1212.3 796.3Z" fill="#979797"/>
<path d="M1243.7 796.0 L1250.3 782.8 L1277.0 773.7 L1282.0 777.8 L1298.7 764.5 L1310.3 755.3 L1318.7 733.7 L1332.0 730.3 L1350.3 750.3 L1357.8 751.2 L1371.7 759.6 L1380.0 753.3 L1388.3 755.8 L1387.0 759.2 L1400.0 769.9 L1405.4 772.8 L1406.6 782.9 L1412.0 787.0" fill="none" stroke="#9a9a9a" stroke-width="1.3"/>
<path d="M1245.5 792.4L1248.2 787.1L1241.1 786.9ZM1253.8 781.6L1259.5 779.7L1254.6 774.6ZM1267.6 776.9L1273.2 775.0L1268.3 769.9ZM1280.5 779.0L1285.2 775.3L1278.8 772.1ZM1291.8 770.0L1296.5 766.2L1290.2 763.1ZM1303.2 760.9L1307.9 757.2L1301.6 754.1ZM1312.3 750.3L1314.4 744.7L1307.4 745.1ZM1317.5 736.7L1319.7 731.1L1312.6 731.6ZM1330.3 728.5L1334.4 732.9L1337.1 726.4ZM1340.1 739.2L1344.2 743.6L1346.9 737.1ZM1349.7 750.2L1355.7 750.9L1353.4 744.2ZM1363.2 754.5L1368.4 757.6L1369.1 750.6ZM1375.4 756.8L1380.1 753.2L1373.9 749.9ZM1388.3 755.8L1386.2 761.4L1393.2 760.9ZM1395.4 766.1L1400.0 769.9L1401.8 763.1ZM1405.7 775.2L1406.4 781.2L1412.4 777.4Z" fill="#979797"/>
<path d="M847.0 797.0 L847.5 790.0 L850.8 788.3 L850.0 781.7 L855.8 776.7 L870.0 777.5 L876.7 778.3 L883.3 786.7 L893.3 789.0 L894.0 797.0" fill="none" stroke="#9a9a9a" stroke-width="1.3"/>
<path d="M845.7 790.9L851.0 788.2L845.4 783.9ZM849.7 781.9L854.3 778.0L847.8 775.1ZM859.8 776.9L865.7 777.3L863.1 770.7ZM871.7 777.7L877.7 778.4L875.5 771.7ZM881.0 783.8L884.7 788.5L887.9 782.2ZM893.1 787.1L893.7 793.0L899.8 789.5Z" fill="#979797"/>
<use href="#sb" x="744.0" y="709.5"/>
<use href="#sb" x="770.0" y="719.5"/>
<use href="#sb" x="799.0" y="714.5"/>
<use href="#sb" x="824.0" y="704.5"/>
<use href="#sb" x="844.0" y="709.5"/>
<use href="#sb" x="868.0" y="713.0"/>
<use href="#sb" x="893.0" y="715.0"/>
<use href="#sb" x="922.0" y="701.0"/>
<use href="#sb" x="927.5" y="720.0"/>
<use href="#sb" x="954.0" y="712.0"/>
<use href="#sb" x="962.0" y="729.5"/>
<use href="#sb" x="832.5" y="729.5"/>
<use href="#sb" x="810.0" y="737.0"/>
<use href="#sb" x="768.0" y="744.5"/>
<use href="#sb" x="796.7" y="746.0"/>
<use href="#sb" x="824.0" y="753.7"/>
<use href="#sb" x="785.0" y="756.0"/>
<use href="#sb" x="866.7" y="736.0"/>
<use href="#sb" x="892.5" y="739.0"/>
<use href="#sb" x="915.0" y="743.7"/>
<use href="#sb" x="929.0" y="743.0"/>
<use href="#sb" x="962.5" y="750.0"/>
<use href="#sb" x="861.7" y="762.0"/>
<use href="#sb" x="835.0" y="767.0"/>
<use href="#sb" x="768.0" y="768.0"/>
<use href="#sb" x="814.0" y="779.5"/>
<use href="#sb" x="746.7" y="785.0"/>
<use href="#sb" x="770.0" y="789.5"/>
<use href="#sb" x="841.7" y="791.0"/>
<use href="#sb" x="877.5" y="790.0"/>
<use href="#sb" x="914.0" y="765.0"/>
<use href="#sb" x="944.0" y="763.0"/>
<use href="#sb" x="886.7" y="757.0"/>
<use href="#sb" x="988.0" y="691.5"/>
<use href="#sb" x="1005.5" y="701.5"/>
<use href="#sb" x="1020.5" y="720.0"/>
<use href="#sb" x="1052.5" y="720.5"/>
<use href="#sb" x="1030.0" y="706.3"/>
<use href="#sb" x="1067.5" y="706.0"/>
<use href="#sb" x="1099.5" y="709.5"/>
<use href="#sb" x="1004.5" y="731.0"/>
<use href="#sb" x="1053.5" y="731.0"/>
<use href="#sb" x="1027.0" y="742.0"/>
<use href="#sb" x="1079.0" y="744.5"/>
<use href="#sb" x="1103.5" y="741.5"/>
<use href="#sb" x="1126.0" y="733.0"/>
<use href="#sb" x="1151.0" y="714.0"/>
<use href="#sb" x="1158.0" y="737.0"/>
<use href="#sb" x="1174.5" y="732.0"/>
<use href="#sb" x="1205.5" y="753.0"/>
<use href="#sb" x="1162.5" y="761.0"/>
<use href="#sb" x="1129.5" y="761.0"/>
<use href="#sb" x="1109.0" y="768.0"/>
<use href="#sb" x="1087.5" y="765.5"/>
<use href="#sb" x="1057.5" y="764.0"/>
<use href="#sb" x="1038.0" y="759.0"/>
<use href="#sb" x="1033.0" y="786.0"/>
<use href="#sb" x="1088.5" y="784.5"/>
<use href="#sb" x="1136.5" y="785.0"/>
<use href="#sb" x="1153.0" y="783.0"/>
<use href="#sb" x="1178.0" y="782.0"/>
<use href="#sb" x="1204.0" y="781.0"/>
<use href="#sb" x="1188.0" y="768.0"/>
<use href="#sb" x="1060.5" y="793.0"/>
<use href="#sb" x="985.0" y="764.0"/>
<use href="#sb" x="1015.0" y="768.5"/>
<use href="#sb" x="1001.5" y="779.0"/>
<use href="#sb" x="1179.0" y="794.0"/>
<use href="#sb" x="1322.0" y="737.0"/>
<use href="#sb" x="1336.0" y="754.0"/>
<use href="#sb" x="1311.0" y="773.0"/>
<use href="#sb" x="1347.0" y="767.0"/>
<use href="#sb" x="1258.0" y="785.0"/>
<use href="#sb" x="1282.0" y="788.0"/>
<use href="#sb" x="1326.0" y="779.0"/>
<use href="#sb" x="1374.0" y="779.5"/>
<use href="#sb" x="1388.0" y="790.0"/>
<use href="#sb" x="1352.0" y="792.0"/>
<use href="#sb" x="1373.0" y="762.0"/>
<use href="#sb" x="1402.0" y="777.0"/>
<path d="M738.0 627.5 L761.7 629.2 L798.3 622.5 L817.5 613.3 L856.7 611.7 L890.0 606.7 L923.3 600.8 L983.0 592.8 L1000.0 591.3 L1017.4 588.9 L1032.5 593.2 L1034.8 610.2 L1016.3 617.8 L1038.9 627.5 L1059.7 619.3 L1091.5 632.5 L1113.0 650.0 L1128.8 655.8 L1121.3 675.0 L1131.3 680.8 L1140.5 678.3 L1154.7 658.3 L1167.0 649.2 L1196.2 626.7 L1212.8 624.7 L1233.7 633.0 L1238.7 650.0 L1237.8 668.3 L1241.3 683.5 L1226.5 707.6 L1272.0 738.7 L1305.3 728.7 L1337.0 721.7 L1355.3 731.2 L1375.3 730.7 L1388.7 755.3 L1412.0 772.5" fill="none" stroke="#fff" stroke-width="1.4" stroke-opacity=".7"/>
<path d="M738.0 627.5 L761.7 629.2 L798.3 622.5 L817.5 613.3 L856.7 611.7 L890.0 606.7 L923.3 600.8 L983.0 592.8 L1000.0 591.3 L1017.4 588.9 L1032.5 593.2 L1034.8 610.2 L1016.3 617.8 L1038.9 627.5 L1059.7 619.3 L1091.5 632.5 L1113.0 650.0 L1128.8 655.8 L1121.3 675.0 L1131.3 680.8 L1140.5 678.3 L1154.7 658.3 L1167.0 649.2 L1196.2 626.7 L1212.8 624.7 L1233.7 633.0 L1238.7 650.0 L1237.8 668.3 L1241.3 683.5 L1226.5 707.6 L1272.0 738.7 L1305.3 728.7 L1337.0 721.7 L1355.3 731.2 L1375.3 730.7 L1388.7 755.3 L1412.0 772.5" fill="none" stroke="#9a6f9c" stroke-opacity=".44" stroke-width="3.1" stroke-dasharray="10 1.6" stroke-linejoin="round"/>
<path d="M738.0 627.5 L761.7 629.2 L798.3 622.5 L817.5 613.3 L856.7 611.7 L890.0 606.7 L923.3 600.8 L983.0 592.8 L1000.0 591.3 L1017.4 588.9 L1032.5 593.2 L1034.8 610.2 L1016.3 617.8 L1038.9 627.5 L1059.7 619.3 L1091.5 632.5 L1113.0 650.0 L1128.8 655.8 L1121.3 675.0 L1131.3 680.8 L1140.5 678.3 L1154.7 658.3 L1167.0 649.2 L1196.2 626.7 L1212.8 624.7 L1233.7 633.0 L1238.7 650.0 L1237.8 668.3 L1241.3 683.5 L1226.5 707.6 L1272.0 738.7 L1305.3 728.7 L1337.0 721.7 L1355.3 731.2 L1375.3 730.7 L1388.7 755.3 L1412.0 772.5" fill="none" stroke="#8d618b" stroke-opacity=".35" stroke-width="1" stroke-dasharray="10 1.6" stroke-linejoin="round"/>
<text font-family="Liberation Sans, sans-serif" font-size="10.5" fill="#85557f" stroke="#f2efe9" stroke-width="1.6" paint-order="stroke" stroke-linejoin="round" transform="translate(750.8 641.2) rotate(-11.0)" textLength="67.4" lengthAdjust="spacingAndGlyphs" >County Dublin</text>
<text font-family="Liberation Sans, sans-serif" font-size="10.5" fill="#85557f" stroke="#f2efe9" stroke-width="1.6" paint-order="stroke" stroke-linejoin="round" transform="translate(828.7 626.3) rotate(1.7)" textLength="30.6" lengthAdjust="spacingAndGlyphs" >Howth</text>
<text font-family="Liberation Sans, sans-serif" font-size="10.5" fill="#85557f" stroke="#f2efe9" stroke-width="1.6" paint-order="stroke" stroke-linejoin="round" transform="translate(917.5 618.7) rotate(-8.8)" textLength="79.9" lengthAdjust="spacingAndGlyphs" >Howth DED 1986</text>
<text font-family="Liberation Sans, sans-serif" font-size="10.5" fill="#85557f" stroke="#f2efe9" stroke-width="1.6" paint-order="stroke" stroke-linejoin="round" transform="translate(1214.5 717.5) rotate(34.0)" textLength="67.0" lengthAdjust="spacingAndGlyphs" >County Dublin</text>
<text font-family="Liberation Sans, sans-serif" font-size="10.5" fill="#85557f" stroke="#f2efe9" stroke-width="1.6" paint-order="stroke" stroke-linejoin="round" transform="translate(1288.0 749.5) rotate(-21.8)" textLength="29.6" lengthAdjust="spacingAndGlyphs" >Howth</text>
<text font-family="Liberation Sans, sans-serif" font-size="10.5" fill="#85557f" stroke="#f2efe9" stroke-width="1.6" paint-order="stroke" stroke-linejoin="round" transform="translate(1334.5 734.5) rotate(19.2)" textLength="36.5" lengthAdjust="spacingAndGlyphs" >Leinster</text>
<text font-family="Liberation Sans, sans-serif" font-size="10.5" fill="#85557f" stroke="#f2efe9" stroke-width="1.6" paint-order="stroke" stroke-linejoin="round" transform="translate(1376.0 765.0) rotate(34.5)" textLength="30.9" lengthAdjust="spacingAndGlyphs" >Fingal</text>
<text font-family="Liberation Sans, sans-serif" font-size="10.5" fill="#6e6e6e" stroke="#e8e7e7" stroke-width="1.4" paint-order="stroke" x="942.5" y="663.3" textLength="49.5" lengthAdjust="spacingAndGlyphs">Dawn View</text>
<text font-family="Liberation Sans, sans-serif" font-size="10.5" fill="#734a08" stroke="#fff" stroke-opacity=".8" stroke-width="1.5" paint-order="stroke" text-anchor="middle" x="851.6" y="687">Cliffs of</text><text font-family="Liberation Sans, sans-serif" font-size="10.5" fill="#734a08" stroke="#fff" stroke-opacity=".8" stroke-width="1.5" paint-order="stroke" text-anchor="middle" x="851.6" y="698.8">Howth</text>
<path d="M853.70 667.20 L858.90 668.20 L859.40 666.80 L858.90 665.40 L853.70 666.40ZM852.45 668.56 L854.19 673.56 L855.65 673.30 L856.61 672.16 L853.15 668.16ZM850.65 668.16 L847.19 672.16 L848.15 673.30 L849.61 673.56 L851.35 668.56ZM850.10 666.40 L844.90 665.40 L844.40 666.80 L844.90 668.20 L850.10 667.20ZM851.35 665.04 L849.61 660.04 L848.15 660.30 L847.19 661.44 L850.65 665.44ZM853.15 665.44 L856.61 661.44 L855.65 660.30 L854.19 660.04 L852.45 665.04Z" fill="#734a08"/>
<g filter="url(#msh)"><path d="M1031.7 665.6 A15 15 0 1 1 1054.5 665.6 L1043.9 678.1 Q1043.1 679 1042.3 678.1 Z" fill="#adbfab" stroke="#f4f3e8" stroke-width="2.4" stroke-linejoin="round" paint-order="stroke"/></g>
<circle cx="1043.1" cy="655.9" r="6.1" fill="#f4f3e8"/>
</svg>
  <div class="zoomctl"><i><b style="position:absolute;left:9px;top:13.9px;width:12px;height:2.1px;background:#000"></b><b style="position:absolute;left:14px;top:9px;width:2.1px;height:12px;background:#000"></b></i><i><b style="position:absolute;left:9px;top:13.4px;width:13px;height:2.1px;background:#000"></b></i></div>
  <div class="sbm">
    <svg class="abs" style="left:14px;top:8px" width="14" height="14" viewBox="0 0 14 14"><rect width="14" height="14" rx="2.200" fill="#0061e0"/><path d="M3 7.400l2.900 3 5.700-7" fill="none" stroke="#fff" stroke-width="1.900"/></svg>
    <div class="abs" style="left:36.2px;top:7px;font-size:14px;line-height:16px;color:#555">Search by Map</div>
  </div>
</div>

</div>
</body>
</html>
